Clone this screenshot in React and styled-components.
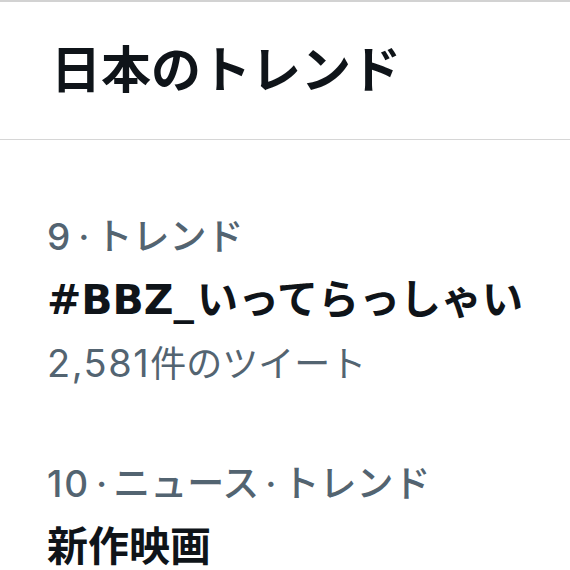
import styled, { createGlobalStyle } from "styled-components";

const GlobalStyle = createGlobalStyle`
  body {
    margin: 0;
    background: #fff;
    font-family: Inter, "Noto Sans CJK JP", sans-serif;
  }
`;

const Panel = styled.section`
  width: 570px;
  height: 570px;
  overflow: hidden;
  border-top: 2px solid #d2d2d2;
  box-sizing: border-box;
`;

const Header = styled.header`
  height: 128px;
  padding: 0 0 9px 51px;
  display: flex;
  align-items: center;
  border-bottom: 1px solid #d6d6d6;
`;

const Heading = styled.h2`
  margin: 0;
  font-family: "Noto Sans CJK JP", sans-serif;
  font-size: 50px;
  font-weight: 700;
  color: #0f1419;
`;

const List = styled.div`
  padding-top: 37px;
`;

const Trend = styled.div`
  padding: 30px 0 29px 47px;
  display: flex;
  flex-direction: column;
`;

const Meta = styled.div`
  line-height: 60px;
  font-size: 37px;
  font-weight: 500;
  color: #536471;
  white-space: nowrap;
`;

const Dot = styled.span`
  margin: 0 6px;
`;

const Num = styled.span`
  letter-spacing: 0.05em;
`;

const Title = styled.div`
  line-height: 64px;
  font-size: 41px;
  font-weight: 700;
  color: #0f1419;
  white-space: nowrap;
`;

const Tag = styled.span`
  font-family: "DejaVu Sans", Inter, sans-serif;
  margin-right: 3px;
`;

const Count = styled.div`
  line-height: 62px;
  font-size: 36px;
  font-weight: 400;
  color: #536471;
  white-space: nowrap;
`;

const CountNum = styled.span`
  font-size: 38px;
  letter-spacing: 0.04em;
`;

const trends = [
  {
    meta: ["9", "トレンド"],
    tag: "#BBZ_",
    title: "いってらっしゃい",
    count: "2,581",
  },
  { meta: ["10", "ニュース", "トレンド"], title: "新作映画" },
];

export default function App() {
  return (
    <>
      <GlobalStyle />
      <Panel>
        <Header>
          <Heading>日本のトレンド</Heading>
        </Header>
        <List>
          {trends.map((t) => (
            <Trend key={t.title}>
              <Meta>
                <Num>{t.meta[0]}</Num>
                {t.meta.slice(1).map((m) => (
                  <span key={m}>
                    <Dot>·</Dot>
                    {m}
                  </span>
                ))}
              </Meta>
              <Title>
                {t.tag && <Tag>{t.tag}</Tag>}
                {t.title}
              </Title>
              {t.count && (
                <Count>
                  <CountNum>{t.count}</CountNum>件のツイート
                </Count>
              )}
            </Trend>
          ))}
        </List>
      </Panel>
    </>
  );
}
